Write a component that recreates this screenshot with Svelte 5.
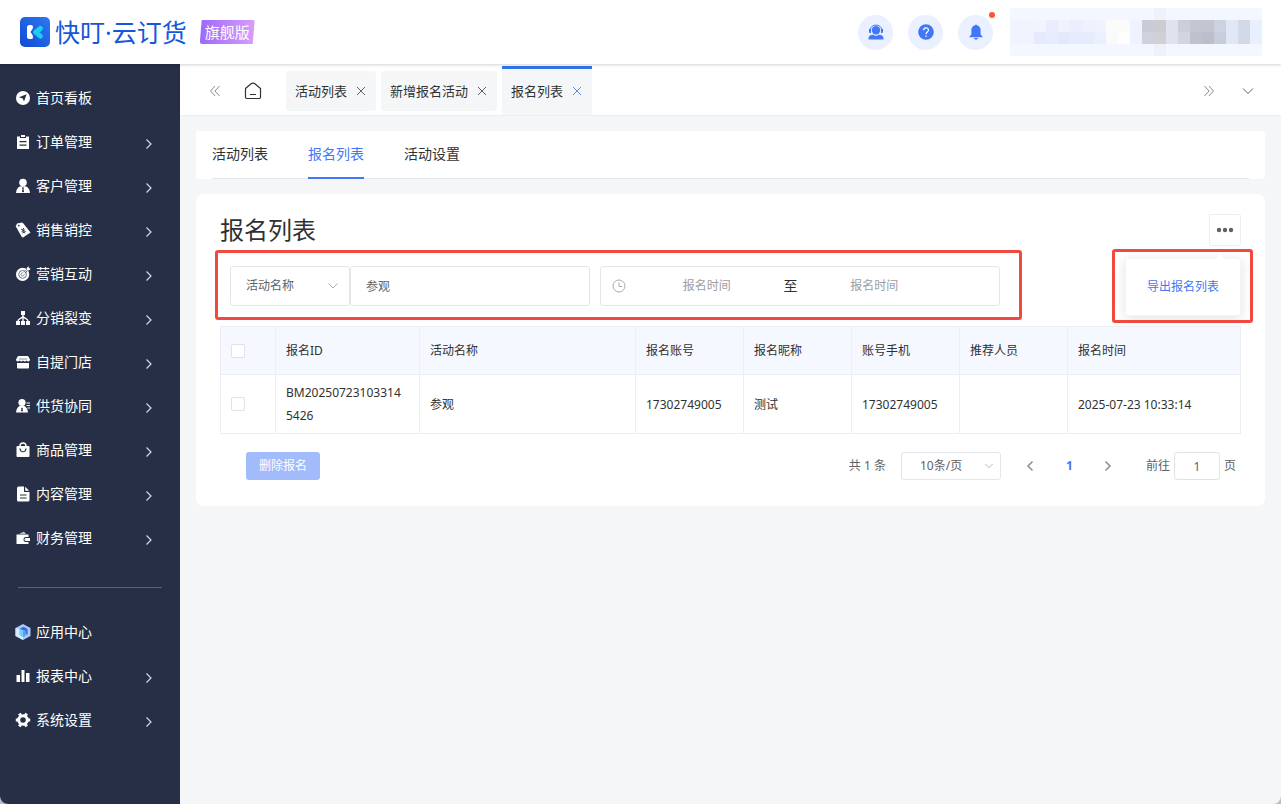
<script>
  const menu = [
    { icon: 'compass', label: '首页看板', leaf: true },
    { icon: 'clipboard', label: '订单管理' },
    { icon: 'user', label: '客户管理' },
    { icon: 'tag', label: '销售销控' },
    { icon: 'target', label: '营销互动' },
    { icon: 'tree', label: '分销裂变' },
    { icon: 'store', label: '自提门店' },
    { icon: 'supplier', label: '供货协同' },
    { icon: 'bag', label: '商品管理' },
    { icon: 'doc', label: '内容管理' },
    { icon: 'wallet', label: '财务管理' }
  ];
  const tools = [
    { icon: 'cube', label: '应用中心', leaf: true },
    { icon: 'bars', label: '报表中心' },
    { icon: 'gear', label: '系统设置' }
  ];

  let tabs = $state([
    { id: 1, label: '活动列表' },
    { id: 2, label: '新增报名活动' },
    { id: 3, label: '报名列表' }
  ]);
  let activeTab = $state(3);
  const sections = ['活动列表', '报名列表', '活动设置'];
  let section = $state('报名列表');
  let field = $state('活动名称');
  let keyword = $state('参观');
  let menuOpen = $state(true);
  let page = $state('1');
  let checked = $state(false);

  const columns = ['报名ID', '活动名称', '报名账号', '报名昵称', '账号手机', '推荐人员', '报名时间'];
  const rows = [['BM202507231033145426', '参观', '17302749005', '测试', '17302749005', '', '2025-07-23 10:33:14']];

  const edge = Array.from({ length: 21 }, (_, i) => (i === 12 ? '#edf1fa' : '#f4f7ff'));
  const account = [
    edge,
    ['#f0f4ff', '#f0f4ff', '#f2f4fe', '#e8eefe', '#f0f3fe', '#eaeefe', '#eef1fe', '#f0f3fe', '#fbfbfc', '#fbfbfb', '#eef3ff', '#c9ccd8', '#cccdd2', '#dfe3ef', '#cccedb', '#c3c6d3', '#c3c5d1', '#cdd1e0', '#e1e8f5', '#d3d9e6', '#e8f0fe'],
    ['#f0f4ff', '#f0f4ff', '#e5eafe', '#e8edfe', '#e3e8fd', '#e6ebfe', '#e6ebfe', '#eaf0fe', '#fafafb', '#fdfefd', '#eef3ff', '#cfd2dd', '#cfd1d6', '#dfe3ef', '#d2d6e2', '#bfc1ce', '#bcbecb', '#c8ccdc', '#e1e8f5', '#d3d9e6', '#e8f0fe'],
    edge
  ];
</script>

{#snippet glyph(name)}
  <svg class="glyph" viewBox="0 0 16 16" aria-hidden="true">
    {#if name === 'compass'}
      <path fill="#fff" fill-rule="evenodd" d="M8 1a7 7 0 1 0 0 14A7 7 0 0 0 8 1zm3.6 3.2L9 11.6 7.8 8.6 4 7.3z" />
    {:else if name === 'clipboard'}
      <path fill="#fff" fill-rule="evenodd" d="M2 2.6h3V4h6V2.6h3V15H2zM4.5 7v1.2h7V7zm0 3.6v1.2h7v-1.200z" />
      <path fill="#fff" d="M6 1h4v2H6z" />
    {:else if name === 'user'}
      <circle cx="8" cy="4.600" r="3.800" fill="#fff" />
      <path fill="#fff" fill-rule="evenodd" d="M5.600 8.200h4.800c2.600.8 4.400 3 4.600 6.800H1c.2-3.800 2-6 4.600-6.800zM8 9l-1 1 .6.900-.7 2.500L8 14.500l1.100-1.100-.7-2.500.6-.9z" />
    {:else if name === 'tag'}
      <path fill="#fff" d="M2 1.500 7 .500l1.200.700L15.500 10.500 8 15.500l-1-.300L.8 4.500z" />
      <circle cx="3.800" cy="3.600" r=".9" fill="#262f45" />
      <path fill="none" stroke="#262f45" stroke-width=".9" d="m6 7 2 1.200.7-2.300M6.500 9.800l3.600-2.200M7.300 11.200l3.500-2M8 8.200l1.800 3" />
    {:else if name === 'target'}
      <circle cx="7.600" cy="8.400" r="6.600" fill="#fff" />
      <circle cx="7.600" cy="8.400" r="3.900" fill="none" stroke="#6f778a" stroke-width="1" />
      <circle cx="7.600" cy="8.400" r="1.600" fill="none" stroke="#6f778a" stroke-width=".8" />
      <path stroke="#262f45" stroke-width="1.800" d="m9.500 6.500 4-4" />
      <path fill="#fff" d="m7.500 7.800 4-4 .3-2 1.800-1.500.3 1.800 1.800.4-1.600 1.900-2 .2-3.900 3.900z" />
    {:else if name === 'tree'}
      <path fill="#fff" d="M6 1h4v4H6zM1 11h4v4H1zM6 11h4v4H6zM11 11h4v4h-4z" />
      <path fill="none" stroke="#fff" stroke-width="1.400" d="M8 5v6M3 11c0-2.500 3-2 5-4.500C10 9 13 8.500 13 11" />
    {:else if name === 'store'}
      <path fill="#fff" d="M3 2h10l2 3.500c0 2.200-2.500 2.400-3.500 1-1 1.200-2.600 1.200-3.500 0-1 1.200-2.600 1.200-3.500 0C3.500 7.900 1 7.700 1 5.500zM2 9h12v4.500a1 1 0 0 1-1 1H3a1 1 0 0 1-1-1z" />
      <path stroke="#8490a5" d="M4 5h8" />
    {:else if name === 'supplier'}
      <circle cx="7" cy="4.500" r="3.600" fill="#fff" />
      <path fill="#fff" fill-rule="evenodd" d="M5 7.800h4c2.300 1 3.700 3.200 4 6.700H1c.3-3.500 1.700-5.700 4-6.700zm2 1.700-1 1 .5.600-.6 2.200h2.200l-.6-2.200.5-.600z" />
      <path stroke="#fff" stroke-width="1.200" d="M11.500 5H15M11.500 7.500H15M12.500 10H15" />
    {:else if name === 'bag'}
      <path fill="none" stroke="#fff" stroke-width="1.400" d="M5 6V4a3 3 0 0 1 6 0v2" />
      <rect x="1.500" y="4" width="13" height="11" rx="1" fill="#fff" />
      <path fill="none" stroke="#262f45" stroke-width="1.200" d="M5 6.500c.3 4.300 5.700 4.300 6 0" />
    {:else if name === 'doc'}
      <path fill="#fff" d="M3.500.500H9V6h5.500v8a1.500 1.500 0 0 1-1.500 1.500H3.500A1.500 1.500 0 0 1 2 14V2A1.500 1.500 0 0 1 3.500.500zM10.200.800l4 4h-4z" />
      <path stroke="#262f45" stroke-width="1.100" d="M5 9h6.500M5 12h6.500" />
    {:else if name === 'wallet'}
      <path fill="#b8bfcc" d="m4 4 5-2.500L11 4z" />
      <path fill="#fff" d="M1.500 4.500h12V7H11a2.500 2.500 0 0 0 0 5h2.500v2h-12z" />
      <path fill="#fff" d="M11 8h4v3h-4a1.500 1.500 0 0 1 0-3z" />
    {:else if name === 'cube'}
      <path fill="#a9c9fb" d="m8 0 7.500 4v8L8 16 .5 12V4z" />
      <path fill="#d7e8ff" d="m.5 4 4 1v6L8 13v3L.5 12z" />
      <path fill="#3e62e0" d="m4.500 5 4-2.200 4 2.200v6l-2-1V7z" />
      <path fill="#5a9cf5" d="m8 7 2.500-1v6L8 13z" />
      <path fill="#69d8f4" d="M4.500 5 8 7v6l-3.500-2z" />
    {:else if name === 'bars'}
      <path fill="#fff" d="M1.500 7H5v7H1.500zM6.500 2h3v12h-3zM11 5h3.500v9H11z" />
    {:else if name === 'gear'}
      <circle cx="8" cy="8" r="4.300" fill="none" stroke="#fff" stroke-width="3" />
      <path stroke="#fff" stroke-width="3" d="M5.500 3.500 4.400 1.600M10.500 3.500l1.100-1.900M3 8H.8M13 8h2.200M5.500 12.500l-1.100 1.900M10.500 12.500l1.100 1.900" />
    {/if}
  </svg>
{/snippet}

{#snippet menuList(items)}
  <ul>
    {#each items as item}
      <li>
        <a href="#{item.icon}">
          {@render glyph(item.icon)}
          <span>{item.label}</span>
          {#if !item.leaf}
            <svg class="arrow" viewBox="0 0 8 12" aria-hidden="true"><path d="m1.500 1.500 4.500 4.500-4.500 4.500" /></svg>
          {/if}
        </a>
      </li>
    {/each}
  </ul>
{/snippet}

<div class="shell">
  <header>
    <a class="brand" href="#home">
      <svg class="logo" viewBox="0 0 30 30" aria-hidden="true">
        <defs>
          <linearGradient id="logo-bg" x1="1" y1="0" x2="0" y2="1">
            <stop offset="0" stop-color="#2f78f2" /><stop offset="1" stop-color="#0e4bd3" />
          </linearGradient>
        </defs>
        <rect width="30" height="30" rx="5" fill="url(#logo-bg)" />
        <path fill="#fff" d="M7 10.500A2.500 2.500 0 0 1 9.500 8h1.800a1.600 1.600 0 0 1 1.600 1.600v1.700L10.500 15l2.400 3.700v1.700a1.600 1.600 0 0 1-1.600 1.600H9.500A2.500 2.500 0 0 1 7 19.500z" />
        <path fill="none" stroke="#1aceef" stroke-width="5" stroke-linecap="round" stroke-linejoin="round" d="m20.400 11.500-4.800 3.700 4.800 4" />
      </svg>
      <strong>快叮·云订货</strong>
      <em>旗舰版</em>
    </a>
    <div class="actions">
      <button aria-label="客服">
        <svg viewBox="0 0 16 16" aria-hidden="true">
          <circle cx="8" cy="6.300" r="4.200" fill="#4277f7" />
          <path fill="none" stroke="#4277f7" d="M2.300 6C2.500-.600 13.500-.600 13.700 6" />
          <path fill="#4277f7" d="M1 5h2v4H2a1 1 0 0 1-1-1zM13 5h2v3a1 1 0 0 1-1 1h-1zM.5 15.500v-1.500c0-2 2-3 4.500-3.200 2 1.400 4 1.400 6 0 2.500.2 4.500 1.200 4.500 3.200v1.500z" />
        </svg>
      </button>
      <button aria-label="帮助">
        <svg viewBox="0 0 16 16" aria-hidden="true">
          <circle cx="8" cy="8" r="7.800" fill="#4277f7" />
          <path fill="none" stroke="#fff" stroke-width="1.200" d="M5.600 6.200c0-3.200 4.900-3.100 4.900-.2C10.500 8 8 7.900 8 10.200" />
          <circle cx="8" cy="12.200" r=".8" fill="#fff" />
        </svg>
      </button>
      <button class="bell" aria-label="消息">
        <svg viewBox="0 0 16 16" aria-hidden="true">
          <path fill="#4277f7" d="M7.200 1.200a.8.8 0 0 1 1.600 0C11.200 1.700 12.600 3.500 12.600 6v4.500l1.900 2v.8h-13v-.8l1.900-2V6c0-2.500 1.400-4.300 3.800-4.800zM6 14h4c-.4 2.200-3.600 2.200-4 0z" />
        </svg>
      </button>
    </div>
    <svg class="account" viewBox="0 0 252 48" aria-hidden="true" shape-rendering="crispEdges">
      {#each account as line, y}
        {#each line as color, x}
          <rect x={x * 12} y={y * 12} width="12" height="12" fill={color} />
        {/each}
      {/each}
    </svg>
  </header>

  <div class="body">
    <nav class="side">
      {@render menuList(menu)}
      <hr />
      {@render menuList(tools)}
    </nav>

    <div class="work">
      <div class="tabbar">
        <button class="fast" aria-label="向左"><svg viewBox="0 0 12 12" aria-hidden="true"><path d="M6 1 1.500 6 6 11M10.500 1 6 6l4.500 5" /></svg></button>
        <button class="home" aria-label="首页">
          <svg viewBox="0 0 18 18" aria-hidden="true"><path d="M1.500 6.500 6.800 2c1.500-1.200 2.900-1.200 4.400 0l5.300 4.500v8.800a1.200 1.200 0 0 1-1.200 1.200H2.700a1.200 1.200 0 0 1-1.200-1.200zM6 12.500h6" /></svg>
        </button>
        <div class="tabs">
          {#each tabs as tab (tab.id)}
            <div class="tab" class:active={tab.id === activeTab}>
              <button class="name" onclick={() => (activeTab = tab.id)}>{tab.label}</button>
              <button class="close" aria-label="关闭{tab.label}" onclick={() => (tabs = tabs.filter((t) => t !== tab))}>
                <svg viewBox="0 0 10 10" aria-hidden="true"><path d="m1 1 8 8M9 1 1 9" /></svg>
              </button>
            </div>
          {/each}
        </div>
        <button class="fast end" aria-label="向右"><svg viewBox="0 0 12 12" aria-hidden="true"><path d="m1.500 1 4.500 5-4.500 5M6 1l4.500 5L6 11" /></svg></button>
        <button class="more-tabs" aria-label="更多标签"><svg viewBox="0 0 12 8" aria-hidden="true"><path d="m1 1.500 5 5 5-5" /></svg></button>
      </div>

      <main>
        <div class="sections">
          <div class="line">
            {#each sections as name}
              <button class:active={name === section} onclick={() => (section = name)}>{name}</button>
            {/each}
          </div>
        </div>

        <section class="card">
          <div class="heading">
            <h1>报名列表</h1>
            <div class="more">
              <button class="dots" aria-label="更多操作" aria-expanded={menuOpen} onclick={() => (menuOpen = !menuOpen)}>
                <svg viewBox="0 0 18 6" aria-hidden="true"><circle cx="3" cy="3" r="2.200" /><circle cx="9" cy="3" r="2.200" /><circle cx="15" cy="3" r="2.200" /></svg>
              </button>
              {#if menuOpen}
                <div class="popover"><button>导出报名列表</button></div>
              {/if}
            </div>
          </div>

          <form class="filters">
            <div class="picker">
              <select aria-label="筛选字段" bind:value={field}>
                <option>活动名称</option>
              </select>
              <svg viewBox="0 0 12 8" aria-hidden="true"><path d="m1.500 1.500 4.500 4.500 4.500-4.500" /></svg>
            </div>
            <input class="keyword" aria-label="关键字" bind:value={keyword} />
            <div class="range">
              <svg viewBox="0 0 14 14" aria-hidden="true"><circle cx="7" cy="7" r="6" /><path d="M7 3.500V7.500h3" /></svg>
              <input aria-label="开始时间" placeholder="报名时间" />
              <span>至</span>
              <input aria-label="结束时间" placeholder="报名时间" />
            </div>
          </form>

          <table>
            <colgroup>
              <col class="w-check" /><col class="w-id" /><col class="w-name" />
              <col class="w-cell" /><col class="w-cell" /><col class="w-cell" /><col class="w-cell" /><col />
            </colgroup>
            <thead>
              <tr>
                <th><input type="checkbox" aria-label="全选" bind:checked /></th>
                {#each columns as column}<th>{column}</th>{/each}
              </tr>
            </thead>
            <tbody>
              {#each rows as row}
                <tr>
                  <td><input type="checkbox" aria-label="选择此行" bind:checked /></td>
                  {#each row as cell}<td>{cell}</td>{/each}
                </tr>
              {/each}
            </tbody>
          </table>

          <div class="footer">
            <button class="remove" disabled={!checked}>删除报名</button>
            <div class="pager">
              <span class="total">共 1 条</span>
              <div class="picker small">
                <select aria-label="每页条数"><option>10条/页</option></select>
                <svg viewBox="0 0 12 8" aria-hidden="true"><path d="m1.500 1.500 4.500 4.500 4.500-4.500" /></svg>
              </div>
              <div class="pages">
                <button aria-label="上一页"><svg viewBox="0 0 8 12" aria-hidden="true"><path d="M6.500 1.500 2 6l4.500 4.500" /></svg></button>
                <button class="current">1</button>
                <button aria-label="下一页"><svg viewBox="0 0 8 12" aria-hidden="true"><path d="M1.500 1.500 6 6l-4.500 4.500" /></svg></button>
              </div>
              <label>前往 <input bind:value={page} /> 页</label>
            </div>
          </div>
        </section>
      </main>
    </div>
  </div>
</div>

<style>
  :global(body) {
    background: #b9bcc2;
  }
  .shell,
  .shell * {
    box-sizing: border-box;
  }
  .shell {
    display: flex;
    flex-direction: column;
    min-height: 100vh;
    background: #f5f6f8;
    border-radius: 0 0 8px 8px;
    overflow: hidden;
    color: #303133;
    font: 12px/24px "Noto Sans", "Noto Sans CJK SC", sans-serif;
  }
  button,
  input,
  select {
    margin: 0;
    padding: 0;
    border: 0;
    background: none;
    color: inherit;
    font: inherit;
    outline: none;
  }
  button {
    cursor: pointer;
  }
  a {
    color: inherit;
    text-decoration: none;
  }
  svg {
    display: block;
    flex: none;
  }

  header {
    position: relative;
    z-index: 1;
    display: flex;
    align-items: center;
    height: 64px;
    padding: 0 19px 0 20px;
    background: #fff;
    box-shadow: 0 1px 3px rgba(0, 0, 0, 0.18);
  }
  .brand {
    display: flex;
    align-items: center;
    margin-right: auto;
  }
  .logo {
    width: 30px;
    height: 30px;
    margin-right: 5px;
  }
  .brand strong {
    color: #1557dc;
    font-size: 25px;
    font-weight: 400;
    line-height: 32px;
  }
  .brand em {
    margin-left: 13px;
    padding: 0 5px;
    background: linear-gradient(90deg, #9d69fb, #d99df8);
    border-radius: 2px;
    clip-path: polygon(2px 0, 100% 0, 53px 100%, 0 100%);
    color: #fff;
    font-size: 15px;
    font-style: normal;
    line-height: 24px;
  }
  .actions {
    display: flex;
    gap: 15px;
    margin-right: 17px;
  }
  .actions button {
    position: relative;
    display: grid;
    place-items: center;
    width: 35px;
    height: 35px;
    border-radius: 50%;
    background: #eaf0ff;
  }
  .actions svg {
    width: 16px;
    height: 16px;
  }
  .bell::after {
    position: absolute;
    top: -3px;
    right: -2px;
    width: 6px;
    height: 6px;
    border-radius: 50%;
    background: #ff5430;
    content: "";
  }
  .account {
    width: 252px;
    height: 48px;
  }

  .body {
    display: flex;
    flex: 1;
  }
  .side {
    flex: none;
    width: 180px;
    padding-top: 12px;
    background: #262f45;
    color: #fff;
    font-size: 14px;
  }
  .side ul {
    margin: 0;
    padding: 0;
    list-style: none;
  }
  .side a {
    display: flex;
    align-items: center;
    height: 44px;
    padding: 0 27px 0 15px;
  }
  .side span {
    flex: 1;
    margin-left: 5px;
  }
  .glyph {
    width: 16px;
    height: 16px;
  }
  .arrow {
    width: 8px;
    height: 12px;
    margin-top: 4px;
    fill: none;
    stroke: #d6d9df;
    stroke-width: 1.2;
  }
  .side hr {
    height: 1px;
    margin: 27px 18px 22px;
    border: 0;
    background: #596172;
  }

  .work {
    flex: 1;
    min-width: 0;
  }
  .tabbar {
    display: flex;
    align-items: center;
    height: 52px;
    padding: 2px 27px 0 29px;
    border-bottom: 1px solid #ebedf0;
    background: #fff;
  }
  .tabbar svg {
    fill: none;
    stroke: #8b8e94;
  }
  .fast svg {
    width: 12px;
    height: 12px;
  }
  .home svg {
    width: 18px;
    height: 18px;
    stroke: #303133;
    stroke-width: 1.2;
  }
  .home {
    margin: 0 24px 0 23px;
  }
  .more-tabs svg {
    width: 12px;
    height: 8px;
    stroke: #5e6166;
  }
  .end {
    margin-right: 27px;
  }
  .tabs {
    display: flex;
    flex: 1;
    align-items: center;
    gap: 5px;
    height: 100%;
  }
  .tab {
    display: flex;
    align-items: center;
    gap: 9px;
    height: 40px;
    padding: 0 10px 0 9px;
    border-radius: 3px;
    background: #f5f6f8;
    font-size: 13px;
  }
  .tab.active {
    height: 100%;
    padding-bottom: 2px;
    border-top: 3px solid #2f74ea;
    border-radius: 0;
  }
  .close svg {
    width: 10px;
    height: 10px;
    stroke: #5e6166;
  }
  .active .close svg {
    stroke: #5b8af8;
  }

  main {
    padding: 15px 16px;
  }
  .sections {
    padding: 0 16px;
    border-radius: 3px;
    background: #fff;
  }
  .line {
    display: flex;
    gap: 40px;
    border-bottom: 1px solid #e4e7ed;
    font-size: 14px;
  }
  .line button {
    height: 48px;
    margin-bottom: -1px;
    border-bottom: 2px solid transparent;
  }
  .line .active {
    border-color: #4277f7;
    color: #4277f7;
  }

  .card {
    margin-top: 15px;
    padding: 20px 24px 26px;
    border-radius: 8px;
    background: #fff;
  }
  .heading {
    display: flex;
    align-items: center;
    justify-content: space-between;
  }
  h1 {
    margin: 0;
    font-size: 24px;
    font-weight: 400;
    line-height: 32px;
  }
  .more {
    position: relative;
  }
  .dots {
    display: grid;
    place-items: center;
    width: 32px;
    height: 32px;
    border: 1px solid #ebeef5;
    border-radius: 2px;
  }
  .dots svg {
    width: 18px;
    height: 6px;
    fill: #5e6166;
  }
  .popover {
    position: absolute;
    z-index: 2;
    top: 44px;
    right: 0;
    padding: 16px 21px;
    border: 1px solid #f4f5f7;
    border-radius: 3px;
    background: #fff;
    box-shadow: 0 2px 12px rgba(0, 0, 0, 0.12);
    color: #4277f7;
    white-space: nowrap;
  }
  .popover::before {
    position: absolute;
    top: -5px;
    right: 15px;
    border: 5px solid transparent;
    border-top: 0;
    border-bottom-color: #fff;
    content: "";
  }
  .popover::after,
  .filters::after {
    position: absolute;
    border: 3px solid #f04a40;
    border-radius: 3px;
    content: "";
    pointer-events: none;
  }
  .popover::after {
    inset: -10px -13px -8px -14px;
  }
  .filters {
    position: relative;
    display: flex;
    width: fit-content;
    margin: 20px 10px;
    color: #606266;
  }
  .filters::after {
    inset: -16px -22px -14px -15px;
  }
  .picker {
    position: relative;
    width: 120px;
  }
  select {
    display: block;
    width: 100%;
    height: 40px;
    padding: 0 15px;
    border: 1px solid #e4e5e8;
    border-radius: 3px;
    appearance: none;
  }
  .picker svg {
    position: absolute;
    top: 0;
    right: 11px;
    width: 12px;
    height: 100%;
    fill: none;
    stroke: #a8abb2;
    pointer-events: none;
  }
  .keyword {
    width: 240px;
    height: 40px;
    margin-right: 10px;
    padding: 0 15px;
    border: 1px solid #e4e5e8;
    border-radius: 3px;
  }
  .range {
    display: flex;
    align-items: center;
    width: 400px;
    height: 40px;
    padding: 0 48px 0 11px;
    border: 1px solid #e4e5e8;
    border-radius: 3px;
  }
  .range svg {
    width: 14px;
    height: 14px;
    margin-right: 4px;
    fill: none;
    stroke: #a8abb2;
  }
  .range input {
    flex: 1;
    min-width: 0;
    text-align: center;
  }
  .range input::placeholder {
    color: #9b9da2;
    opacity: 1;
  }
  .range span {
    color: #303133;
    font-size: 14px;
  }

  table {
    width: 100%;
    border-collapse: collapse;
    table-layout: fixed;
  }
  .w-check {
    width: 55px;
  }
  .w-id {
    width: 144px;
  }
  .w-name {
    width: 216px;
  }
  .w-cell {
    width: 108px;
  }
  th,
  td {
    padding: 0 14px 0 10px;
    border: 1px solid #ebeef2;
    font-weight: 400;
    line-height: 23px;
    text-align: left;
    vertical-align: middle;
    overflow-wrap: anywhere;
  }
  th {
    height: 48px;
    background: #f5f8ff;
  }
  td {
    height: 59px;
  }
  [type="checkbox"] {
    display: block;
    width: 14px;
    height: 14px;
    border: 1px solid #dfe2e7;
    border-radius: 2px;
    background: #fff;
    appearance: none;
  }
  [type="checkbox"]:checked {
    background: #4277f7;
  }

  .footer {
    display: flex;
    align-items: center;
    justify-content: space-between;
    margin-top: 18px;
    padding: 0 5px 0 26px;
    color: #606266;
  }
  .remove {
    height: 28px;
    padding: 0 13px;
    border-radius: 3px;
    background: #4277f7;
    color: #fff;
  }
  .remove:disabled {
    background: #a1bbfb;
  }
  .pager,
  .pages,
  label {
    display: flex;
    align-items: center;
  }
  .small {
    width: 100px;
    margin: 0 10px 0 15px;
  }
  .small select {
    height: 28px;
    padding: 0 18px;
  }
  .small svg {
    right: 7px;
    width: 10px;
  }
  .pages button {
    display: grid;
    place-items: center;
    width: 39px;
    height: 28px;
  }
  .pages svg {
    width: 8px;
    height: 12px;
    fill: none;
    stroke: #8f9299;
    stroke-width: 1.6;
  }
  .pages .current {
    color: #4277f7;
    font-weight: 700;
  }
  label {
    gap: 4px;
    margin-left: 18px;
  }
  label input {
    width: 46px;
    height: 28px;
    border: 1px solid #e1e3e7;
    border-radius: 3px;
    text-align: center;
  }
</style>
